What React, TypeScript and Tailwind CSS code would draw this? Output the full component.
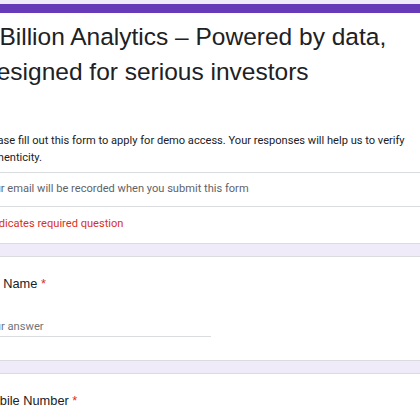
import React from "react";

export default function App() {
  return (
    <div className="w-[420px] h-[420px] overflow-hidden bg-[#f0ebf8]">
      <div className="pt-[4px] ml-[-38px] w-[640px] flex flex-col gap-[12px]">
        {/* Header card */}
        <div className="bg-white border border-[#dadce0] border-t-0 rounded-b-[8px]">
          <div className="h-[9px] bg-[#673ab7]" />
          <div className="pl-[19px] pr-[19px]">
            <div className="pt-[6px] ml-[-3px] font-['Liberation_Sans',Arial,sans-serif] text-[24.5px] leading-[35px] text-[#202124] w-[460px]">
              1 Billion Analytics – Powered by data,
              <br />
              Designed for serious investors
            </div>
            <div className="mt-[43px] font-['Roboto',sans-serif] text-[11.1px] leading-[17px] text-[#202124] w-[440px]">
              Please fill out this form to apply for demo access. Your responses will help us to verify authenticity.
            </div>
          </div>
          <div className="mt-[6px] border-t border-[#dadce0]" />
          <div className="h-[33px] flex items-center pl-[19px] font-['Roboto',sans-serif] text-[11.1px] text-[#5f6368]">
            Your email will be recorded when you submit this form
          </div>
          <div className="border-t border-[#dadce0]" />
          <div className="h-[36px] pt-[8px] pl-[19px] font-['Roboto',sans-serif] text-[11.1px] leading-[17px] text-[#d93025]">
            * Indicates required question
          </div>
        </div>

        {/* Name card */}
        <div className="bg-white border border-[#dadce0] rounded-[8px] h-[105px] pl-[19px] pt-[17px]">
          <div className="ml-[-3px] font-['Liberation_Sans',Arial,sans-serif] text-[12.8px] leading-[20px] text-[#202124]">
            Full Name <span className="text-[#d93025]">*</span>
          </div>
          <div className="mt-[24px] w-[229px] border-b border-[#dadce0] pb-[1px] font-['Roboto',sans-serif] text-[11.2px] leading-[17px] text-[#70757a]">
            Your answer
          </div>
        </div>

        {/* Mobile card */}
        <div className="bg-white border border-[#dadce0] rounded-[8px] h-[105px] pl-[19px] pt-[17px]">
          <div className="font-['Liberation_Sans',Arial,sans-serif] text-[12.8px] leading-[20px] text-[#202124]">
            Mobile Number <span className="text-[#d93025]">*</span>
          </div>
        </div>
      </div>
    </div>
  );
}
